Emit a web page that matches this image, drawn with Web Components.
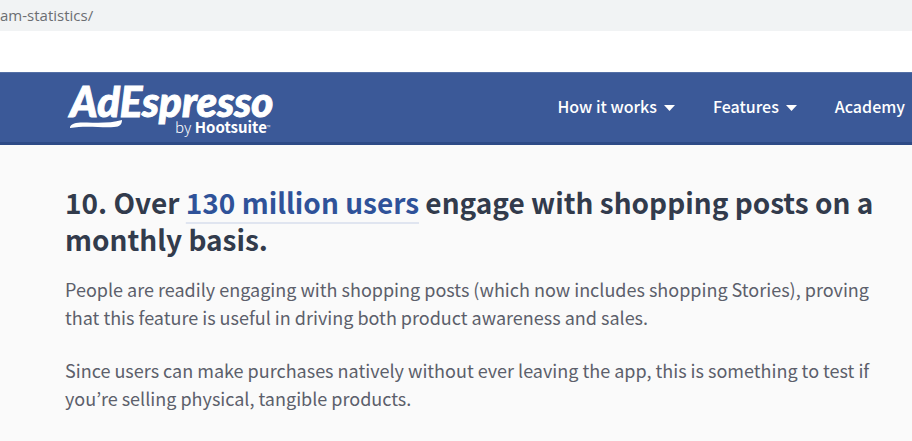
<!DOCTYPE html>
<html lang="en">
<head>
<meta charset="utf-8">
<title>AdEspresso</title>
<style>
  body { margin: 0; background: #fafafa; font-family: "Noto Sans CJK KR", "Open Sans", sans-serif; }
</style>
</head>
<body>
<address-bar>am-statistics/</address-bar>
<site-header>
  <brand-logo slot="brand"></brand-logo>
  <nav-item menu>How it works</nav-item>
  <nav-item menu>Features</nav-item>
  <nav-item>Academy</nav-item>
</site-header>
<article-section>
  <span slot="title">10. Over <stat-link>130 million users</stat-link> engage with shopping posts on a monthly basis.</span>
  <text-block>People are readily engaging with shopping posts (which now includes shopping Stories), proving that this feature is useful in driving both product awareness and sales.</text-block>
  <text-block>Since users can make purchases natively without ever leaving the app, this is something to test if you’re selling physical, tangible products.</text-block>
</article-section>
<script>
const define = (name, html, setup) => customElements.define(name, class extends HTMLElement {
  constructor() {
    super();
    this.attachShadow({ mode: 'open' }).innerHTML = html;
  }
  connectedCallback() { if (setup) setup(this, this.shadowRoot); }
});

define('address-bar', `
  <style>
    :host { display: block; background: #fff; padding-bottom: 41px; }
    div { background: #f1f3f4; color: #6b6e72; font: 15px/31px "Open Sans", sans-serif; white-space: nowrap; overflow: hidden; }
  </style>
  <div><slot></slot></div>`);

define('site-header', `
  <style>
    :host { display: block; }
    header { display: flex; justify-content: space-between; align-items: center; box-sizing: border-box; min-height: 73px;
      padding: 0 7px 0 70px; background: #3b5998; border-top: 1px solid #5470a6; border-bottom: 3px solid #2d4a86; }
    nav { display: flex; gap: 38px; padding-bottom: 4px; }
  </style>
  <header><slot name="brand"></slot><nav aria-label="Main"><slot></slot></nav></header>`);

define('nav-item', `
  <style>
    :host { display: block; }
    a, button { display: flex; align-items: center; gap: 7px; margin: 0; padding: 0; border: 0; background: none; color: #fff;
      font: 500 16px/24px "Noto Sans CJK KR", sans-serif; text-decoration: none; white-space: nowrap; cursor: pointer; }
    svg { display: block; margin-top: 4px; }
  </style>`, (host, root) => {
  if (root.querySelector('slot')) return;
  root.innerHTML += host.hasAttribute('menu')
    ? '<button type="button" aria-haspopup="true"><slot></slot><svg width="11" height="6" viewBox="0 0 11 6" aria-hidden="true"><path d="M0 0h11L5.500 6z" fill="#fff"/></svg></button>'
    : '<a href="#"><slot></slot></a>';
});

define('brand-logo', `
  <style>
    :host { display: block; padding-top: 4px; }
    a { display: grid; grid-template-columns: 105px auto; row-gap: 2px; color: #fff; text-decoration: none; white-space: nowrap; }
    .name { grid-column: 1 / 3; font: italic 900 42px/32px Lato, sans-serif; -webkit-text-stroke: 1px #fff; }
    .by { font: 300 15px/16px "Noto Sans CJK KR", sans-serif; }
    b { font-weight: 700; }
    small { font-size: 5px; vertical-align: 4px; line-height: 1; }
  </style>
  <a href="#">
    <span class="name">AdEspresso</span>
    <svg width="54" height="12" viewBox="0 0 54 12" aria-hidden="true"><path d="M0 8C1 4 8 3 17 3.500C30 4 42 4 52 1C52 5 50 8 44 8C31 9 17 6 0 9Z" fill="#fff"/></svg>
    <span class="by">by <b>Hootsuite</b><small>™</small></span>
  </a>`);

define('article-section', `
  <style>
    :host { display: block; padding: 39px 32px 24px 65px; }
    h2 { margin: 0 0 17px; color: #323b4c; font: 700 28px/37px "Noto Sans CJK KR", sans-serif; }
    .body { display: flex; flex-direction: column; gap: 25px; }
  </style>
  <h2><slot name="title"></slot></h2>
  <div class="body"><slot></slot></div>`);

define('stat-link', `
  <style>
    :host { display: inline; }
    a { color: #2f5299; text-decoration: underline 2px #e0e5f0; text-underline-offset: 8px; text-decoration-skip-ink: none; }
  </style>
  <a href="#"><slot></slot></a>`);

define('text-block', `
  <style>
    :host { display: block; }
    p { margin: 0; color: #5c5f6b; font: 18px/28px "Noto Sans CJK KR", sans-serif; }
  </style>
  <p><slot></slot></p>`);
</script>
</body>
</html>
